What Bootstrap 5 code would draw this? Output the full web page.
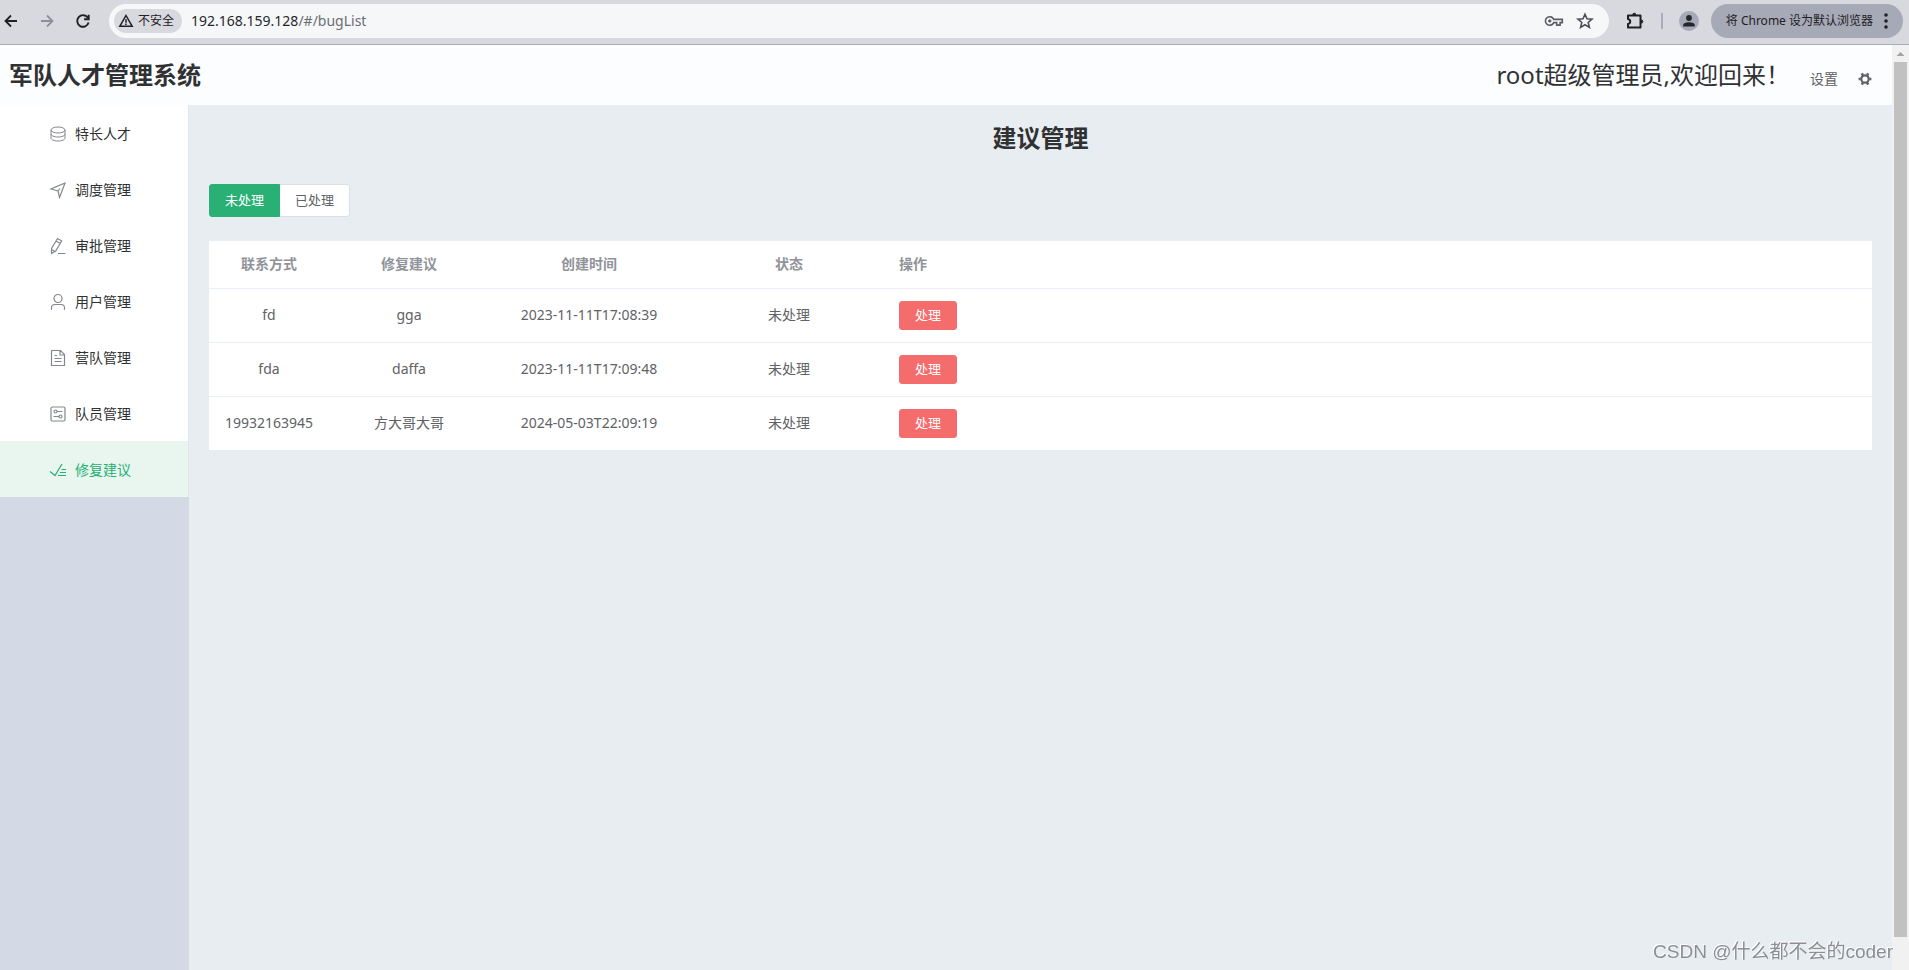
<!DOCTYPE html>
<html lang="zh-CN">
<head>
<meta charset="utf-8">
<meta name="viewport" content="width=device-width, initial-scale=1">
<title>军队人才管理系统</title>
<link href="https://cdn.jsdelivr.net/npm/bootstrap@5.3.0/dist/css/bootstrap.min.css" rel="stylesheet">
<style>
  body { font-family: "Noto Sans", "Noto Sans CJK SC", sans-serif; font-size: 14px; line-height: 20px; color: #303133; }
  a { text-decoration: none; }
  svg { display: block; flex: none; }

  /* browser toolbar */
  .chrome-bar { height: 45px; background: #d8d9df; border-bottom: 1px solid #a9acb7; padding: 0 6px 2px 0; font-size: 12px; color: #1f2024; }
  .nav-tools { width: 109px; padding-left: 2px; gap: 18px; }
  .chrome-bar button { background: none; border: 0; padding: 0; color: inherit; }
  .chrome-bar .forward { color: #8d8f96; }
  .address { height: 34px; background: #f6f7f9; border-radius: 17px; padding: 0 15px 0 5px; margin-right: 16px; gap: 12px; }
  .chrome-bar .insecure { height: 24px; border-radius: 12px; background: #d8d9df; padding: 0 8px 0 4px; gap: 4px; }
  .url-text { font-size: 14px; color: #26272b; margin-left: -3px; }
  .url-text span { color: #6b6d73; }
  .bar-rule { width: 2px; height: 16px; background: #a9acb9; }
  .chrome-bar .avatar { width: 20px; height: 20px; border-radius: 50%; background: #a6a9b6; margin-right: 12px; }
  .chrome-bar .default-pill { height: 34px; border-radius: 17px; background: #a6a9b6; padding: 0 15px; gap: 11px; }

  /* application */
  .app-header { height: 60px; background: #fcfdff; padding: 0 20px 0 9px; }
  .app-header h1 { font-size: 24px; line-height: 32px; font-weight: 700; margin: 0; }
  .welcome { font-size: 24px; line-height: 32px; }
  .settings { color: #606266; gap: 20px; margin-left: 20px; padding-top: 8px; }
  .side { width: 189px; background: #d3dae6; }
  .menu { background: #fff; border-right: 1px solid #e2e5ea; }
  .menu a { height: 56px; padding: 2px 0 0 49px; gap: 8px; color: #303133; }
  .menu svg { color: #84878d; }
  .menu a.active { background: #e9f6ef; color: #26b074; }
  .menu a.active svg { color: inherit; }
  .content { background: #e8edf1; padding: 16px 20px; }
  .content h2 { font-size: 24px; line-height: 34px; font-weight: 700; margin: 0 0 29px; text-align: center; }
  .tabs .btn { font-size: 13px; line-height: 19px; padding: 6px 15px; border-radius: 3px; background: #fff; border-color: #dcdfe6; color: #606266; }
  .tabs .btn-check:checked + .btn { background: #29b075; border-color: #29b075; color: #fff; }
  .bug-table { table-layout: fixed; margin: 24px 0 0; --bs-table-bg: #fff; background: #fff; text-align: center; }
  .bug-table th, .bug-table td { padding: 0 10px; border-bottom: 1px solid #ebeef5; color: #606266; vertical-align: middle; }
  .bug-table th { height: 47px; color: #909399; font-weight: 700; }
  .bug-table td { height: 54px; }
  .bug-table tbody tr:last-child td { border-bottom: 0; }
  .bug-table .ops { text-align: left; }
  .c-phone { width: 120px; } .c-tip { width: 160px; } .c-time, .c-state { width: 200px; }
  .btn-handle { display: block; font-size: 13px; line-height: 19px; padding: 4px 15px; height: 29px; border-radius: 3px; background: #f56c6c; border-color: #f56c6c; color: #fff; }
  .page-scroll { width: 17px; background: #f1f1f1; padding: 0 2px 33px; }
  .page-scroll .thumb { background: #c1c1c1; }
  .watermark { position: fixed; right: 16px; bottom: 4px; font: 19px/28px "Liberation Sans", "Noto Sans CJK SC", sans-serif; color: #8b8f94; text-shadow: -1px -1px 0 #fff; }
</style>
</head>
<body class="d-flex flex-column min-vh-100">

<header class="chrome-bar d-flex align-items-center">
  <div class="nav-tools d-flex align-items-center">
    <button type="button" aria-label="后退"><svg width="18" height="18" viewBox="0 0 18 18" fill="none" stroke="currentColor" stroke-width="1.8"><path d="M15 9H4M9 3.5 3.5 9 9 14.5"/></svg></button>
    <button type="button" aria-label="前进" class="forward"><svg width="18" height="18" viewBox="0 0 18 18" fill="none" stroke="currentColor" stroke-width="1.8"><path d="M3 9h11M9 3.5 14.5 9 9 14.5"/></svg></button>
    <button type="button" aria-label="刷新"><svg width="18" height="18" viewBox="0 0 18 18" fill="none" stroke="currentColor" stroke-width="1.9"><path d="M13.8 5.7A5.8 5.8 0 1 0 14.6 10.5M14.7 2.8v4.4h-4.6"/></svg></button>
  </div>
  <div class="address d-flex align-items-center flex-grow-1">
    <button type="button" class="insecure d-flex align-items-center"><svg width="16" height="16" viewBox="0 0 16 16" fill="none" stroke="currentColor" stroke-width="1.5"><path d="M8 2.5 14.2 13.3H1.8ZM8 6.3v3.4M8 10.6V12"/></svg>不安全</button>
    <div class="url-text flex-grow-1">192.168.159.128<span>/#/bugList</span></div>
    <button type="button" aria-label="密码"><svg width="20" height="20" viewBox="0 0 20 20" fill="none" stroke="#5b5e66" stroke-width="1.6"><path d="M9.7 8.4a4.3 4.3 0 1 0 0 3.2h3v2.5h3.4v-2.5h2.2V8.4Z"/><circle cx="5.8" cy="10" r="1.2" fill="#5b5e66" stroke-width="1"/></svg></button>
    <button type="button" aria-label="收藏"><svg width="18" height="18" viewBox="0 0 18 18" fill="none" stroke="#4b4e56" stroke-width="1.6"><path d="m9 2.2 2 4.6 5 .4-3.8 3.3 1.2 4.9L9 12.8l-4.4 2.6 1.2-4.9L2 7.2l5-.4Z"/></svg></button>
  </div>
  <button type="button" aria-label="扩展程序"><svg width="20" height="20" viewBox="0 0 20 20" fill="none" stroke="currentColor" stroke-width="2" stroke-linejoin="round"><path d="M3 4.500h12.500v12H3v-3.600c3-.6 3-4.200 0-4.800Z"/><path d="M7.700 3.800a1.600 1.600 0 0 1 3.200 0ZM16.200 8.900a1.600 1.600 0 0 1 0 3.200Z" fill="currentColor" stroke-width="1"/></svg></button>
  <span class="bar-rule mx-3"></span>
  <button type="button" aria-label="用户" class="avatar d-flex align-items-center justify-content-center"><svg width="14" height="14" viewBox="0 0 14 14" fill="#24262c"><circle cx="7" cy="4" r="2.900"/><path d="M1.200 12.500v-1.400C1.200 9 4.500 8.200 7 8.200s5.800.8 5.800 2.900v1.400Z"/></svg></button>
  <button type="button" class="default-pill d-flex align-items-center">将 Chrome 设为默认浏览器
    <svg width="4" height="16" viewBox="0 0 4 16" fill="currentColor"><circle cx="2" cy="2" r="1.800"/><circle cx="2" cy="8" r="1.800"/><circle cx="2" cy="14" r="1.800"/></svg></button>
</header>

<div class="d-flex flex-grow-1">
  <div class="d-flex flex-column flex-grow-1">
    <header class="app-header d-flex align-items-center">
      <h1>军队人才管理系统</h1>
      <div class="welcome ms-auto">root超级管理员,欢迎回来！</div>
      <a href="#" class="settings d-flex align-items-center">设置
        <svg width="14" height="14" viewBox="0 0 14 14" fill="none" stroke="currentColor"><circle cx="7" cy="7" r="3.700" stroke-width="2.200"/><path d="M3.800 1.450l1 1.730M9.200 10.820l1 1.730M.6 7h2M11.400 7h2M3.800 12.550l1-1.730M9.200 3.180l1-1.730" stroke-width="2.600"/></svg></a>
    </header>
    <div class="d-flex flex-grow-1">
      <aside class="side flex-shrink-0">
        <nav class="menu d-flex flex-column">
          <a href="#" class="d-flex align-items-center"><svg width="18" height="18" viewBox="0 0 18 18" fill="none" stroke="currentColor"><ellipse cx="9" cy="5" rx="7" ry="3"/><path d="M2 5v8c0 1.700 3.100 3 7 3s7-1.300 7-3V5M2 9c0 1.700 3.100 3 7 3s7-1.300 7-3"/></svg>特长人才</a>
          <a href="#" class="d-flex align-items-center"><svg width="18" height="18" viewBox="0 0 18 18" fill="none" stroke="currentColor" stroke-width="1.200"><path d="M16 2 2 8l7 2 1.500 6.500Z"/><path d="m9 10 2-2.500"/></svg>调度管理</a>
          <a href="#" class="d-flex align-items-center"><svg width="18" height="18" viewBox="0 0 18 18" fill="none" stroke="currentColor" stroke-width="1.200"><path d="M2.500 11.500 8.500 1.500l4.200 2.500-6 10-4.200 2.500ZM7 4l4.200 2.500M2.500 12.500l3.500 2M9 16.500h7.500"/></svg>审批管理</a>
          <a href="#" class="d-flex align-items-center"><svg width="18" height="18" viewBox="0 0 18 18" fill="none" stroke="currentColor" stroke-width="1.200"><circle cx="9" cy="5.500" r="4"/><path d="M2.500 16.800v-2c0-2 1.500-3.300 3.500-3.300h6c2 0 3.500 1.300 3.500 3.300v2"/></svg>用户管理</a>
          <a href="#" class="d-flex align-items-center"><svg width="18" height="18" viewBox="0 0 18 18" fill="none" stroke="currentColor" stroke-width="1.200"><path d="M2.500 1.500h9l4 4v11h-13ZM11 1.500V6h4.500M5.500 6.500H8M5.500 9.500h7M5.500 12.500h7"/></svg>营队管理</a>
          <a href="#" class="d-flex align-items-center"><svg width="18" height="18" viewBox="0 0 18 18" fill="none" stroke="currentColor" stroke-width="1.200"><rect x="2" y="2" width="14" height="14" rx="1.500"/><circle cx="6.500" cy="6.500" r="1.500"/><path d="M8 6.500h5.500M4.500 11.500H10"/><circle cx="11.500" cy="11.500" r="1.500"/></svg>队员管理</a>
          <a href="#" class="d-flex align-items-center active"><svg width="18" height="18" viewBox="0 0 18 18" fill="none" stroke="currentColor" stroke-width="1.200"><path d="m1 10.500 5 4L13 3M12.500 8.500H17M11 11.500h6M9 14.500h8"/></svg>修复建议</a>
        </nav>
      </aside>
      <main class="content flex-grow-1">
        <h2>建议管理</h2>
        <div class="btn-group tabs d-inline-flex align-top" role="group" aria-label="处理状态">
          <input type="radio" class="btn-check" name="state" id="state-todo" checked>
          <label class="btn" for="state-todo">未处理</label>
          <input type="radio" class="btn-check" name="state" id="state-done">
          <label class="btn" for="state-done">已处理</label>
        </div>
        <table class="table bug-table">
          <colgroup><col class="c-phone"><col class="c-tip"><col class="c-time"><col class="c-state"><col></colgroup>
          <thead>
            <tr><th scope="col">联系方式</th><th scope="col">修复建议</th><th scope="col">创建时间</th><th scope="col">状态</th><th scope="col" class="ops">操作</th></tr>
          </thead>
          <tbody>
            <tr><td>fd</td><td>gga</td><td>2023-11-11T17:08:39</td><td>未处理</td><td class="ops"><button type="button" class="btn btn-handle">处理</button></td></tr>
            <tr><td>fda</td><td>daffa</td><td>2023-11-11T17:09:48</td><td>未处理</td><td class="ops"><button type="button" class="btn btn-handle">处理</button></td></tr>
            <tr><td>19932163945</td><td>方大哥大哥</td><td>2024-05-03T22:09:19</td><td>未处理</td><td class="ops"><button type="button" class="btn btn-handle">处理</button></td></tr>
          </tbody>
        </table>
      </main>
    </div>
  </div>
  <div class="page-scroll d-flex flex-column flex-shrink-0" aria-hidden="true">
    <svg width="13" height="17" viewBox="0 0 13 17" fill="#a3a3a3"><path d="M2.500 11h8L6.500 7Z"/></svg>
    <div class="thumb flex-grow-1"></div>
  </div>
</div>

<div class="watermark">CSDN @什么都不会的coder</div>

<script src="https://cdn.jsdelivr.net/npm/bootstrap@5.3.0/dist/js/bootstrap.bundle.min.js"></script>
</body>
</html>
